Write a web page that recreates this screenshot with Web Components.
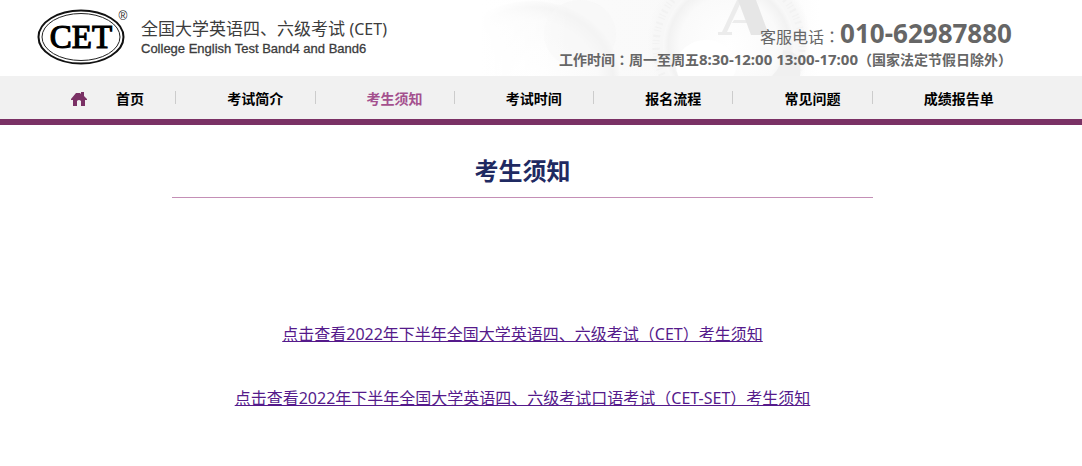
<!DOCTYPE html>
<html lang="zh-CN">
<head>
<meta charset="utf-8">
<meta name="viewport" content="width=device-width, initial-scale=1">
<title>考生须知</title>
<style>
  body {
    margin: 0;
    background: #fff;
    color: #000;
    font-family: "Noto Sans", "Noto Sans CJK SC", sans-serif;
    font-size: 14px;
    --brand: #7a3165;
    --gutter: 0 70px 0 37px;
  }
</style>
</head>
<body>
<site-header>
  <site-logo slot="logo"></site-logo>
  <service-line slot="service"></service-line>
</site-header>
<site-nav>
  <nav-item href="#home" icon>首页</nav-item>
  <nav-item href="#intro">考试简介</nav-item>
  <nav-item href="#notice" current>考生须知</nav-item>
  <nav-item href="#time">考试时间</nav-item>
  <nav-item href="#process">报名流程</nav-item>
  <nav-item href="#faq">常见问题</nav-item>
  <nav-item href="#report">成绩报告单</nav-item>
</site-nav>
<notice-page>
  <span slot="title">考生须知</span>
  <notice-link href="#cet">点击查看2022年下半年全国大学英语四、六级考试（CET）考生须知</notice-link>
  <notice-link href="#cet-set">点击查看2022年下半年全国大学英语四、六级考试口语考试（CET-SET）考生须知</notice-link>
</notice-page>

<script>
const define = (name, html, setup) => customElements.define(name, class extends HTMLElement {
  connectedCallback() {
    if (this.shadowRoot) return;
    this.attachShadow({ mode: 'open' }).innerHTML = html;
    if (setup) setup(this, this.shadowRoot);
  }
});

define('header-art', `
  <style>
    :host { display: block; width: 340px; height: 76px; }
    svg { display: block; }
  </style>
  <svg width="340" height="76" viewBox="0 0 340 76" aria-hidden="true">
    <defs>
      <linearGradient id="haze"><stop offset="0" stop-color="#fff"/><stop offset=".35" stop-color="#fafafa"/><stop offset=".8" stop-color="#f9f9f9"/><stop offset="1" stop-color="#fff"/></linearGradient>
      <radialGradient id="coin"><stop offset="0" stop-color="#fff"/><stop offset=".75" stop-color="#fafafa"/><stop offset=".92" stop-color="#f2f2f2"/><stop offset="1" stop-color="#f9f9f9"/></radialGradient>
      <linearGradient id="fade"><stop offset="0" stop-color="#fff"/><stop offset="1" stop-color="#fff" stop-opacity="0"/></linearGradient>
      <radialGradient id="rim"><stop offset="0" stop-color="#f7f7f7"/><stop offset=".9" stop-color="#f7f7f7"/><stop offset="1" stop-color="#f7f7f7" stop-opacity="0"/></radialGradient>
    </defs>
    <rect width="340" height="76" fill="url(#haze)"/>
    <ellipse cx="52" cy="78" rx="88" ry="77" fill="url(#coin)"/>
    <ellipse cx="100" cy="34" rx="36" ry="34" fill="#f5f5f5" opacity=".5"/>
    <circle cx="249" cy="42" r="82" fill="url(#rim)"/>
    <circle cx="249" cy="46" r="66" fill="url(#coin)"/>
    <ellipse cx="226" cy="66" rx="30" ry="26" fill="#fff"/>
    <circle cx="249" cy="46" r="73" fill="none" stroke="#efefef" stroke-width="7" stroke-dasharray="1 3 2 4 1 2" opacity=".6"/>
    <path d="M262 0L247 32h5v3h-14v-3h4L257 0z" fill="#ececec"/>
    <path d="M254 20h18v3h-20z" fill="#ececec"/>
    <path d="M258 0h18l13 35h-18z" fill="#e6e6e6"/>
    <path d="M303 50q20 0 17 26h-28q10-9 11-26z" fill="#f0f0f0"/>
    <rect width="90" height="76" fill="url(#fade)"/>
  </svg>`);

define('site-header', `
  <style>
    :host { display: block; position: relative; background: #fff; }
    header-art { position: absolute; top: 0; right: 262px; }
    header { position: relative; display: flex; justify-content: space-between; align-items: flex-start; min-height: 76px; padding: var(--gutter); box-sizing: border-box; }
  </style>
  <header-art></header-art>
  <header><slot name="logo"></slot><slot name="service"></slot></header>`);

define('site-logo', `
  <style>
    :host { display: flex; gap: 12px; padding-top: 8px; color: #3c3c3c; }
    svg { display: block; }
    .name { display: grid; align-content: start; padding-top: 10px; white-space: nowrap; }
    .zh { font-size: 17px; line-height: 22px; }
    small { font-size: 16px; }
    .en { font: 13px/18px "Liberation Sans", Arial, sans-serif; -webkit-text-stroke: 0.3px; }
  </style>
  <svg width="92" height="60" viewBox="0 0 92 60" role="img" aria-label="CET">
    <ellipse cx="44" cy="29" rx="42.5" ry="26.5" fill="#fff" stroke="#111" stroke-width="2"/>
    <ellipse cx="44" cy="29" rx="39" ry="23.5" fill="none" stroke="#222" stroke-width="1"/>
    <text x="44" y="40" text-anchor="middle" font-family="Liberation Serif, serif" font-size="33" fill="#000" stroke="#000" stroke-width="1.2">CET</text>
    <text x="86" y="12" text-anchor="middle" font-family="Liberation Sans, sans-serif" font-size="12" fill="#222">®</text>
  </svg>
  <div class="name">
    <span class="zh">全国大学英语四、六级考试 <small>(CET)</small></span>
    <span class="en">College English Test Band4 and Band6</span>
  </div>`);

define('service-line', `
  <style>
    :host { display: grid; justify-items: end; padding-top: 18px; color: #666; white-space: nowrap; }
    .phone { height: 30px; line-height: 30px; font-size: 16px; }
    strong { font-size: 26px; }
    .hours { font-size: 14px; line-height: 22px; font-weight: bold; }
    .hours span { font-size: 15px; }
    i { font-style: normal; font-family: "Noto Sans CJK TC", sans-serif; }
  </style>
  <div class="phone">客服电话<i lang="zh-TW">：</i><strong>010-62987880</strong></div>
  <div class="hours">工作时间<i lang="zh-TW">：</i>周一至周五<span>8:30-12:00 13:00-17:00</span>（国家法定节假日除外）</div>`);

define('site-nav', `
  <style>
    :host { display: block; background: #f1f1f1; border-bottom: 6px solid var(--brand); }
    nav { display: grid; grid-template-columns: repeat(7, 1fr); padding: var(--gutter); }
  </style>
  <nav><slot></slot></nav>`);

define('nav-item', `
  <style>
    :host { display: flex; align-items: center; height: 43px; padding-left: 51px; }
    :host([icon]) { padding-left: 34px; }
    :host(:not(:last-child))::after { content: ""; width: 1px; height: 13px; margin-left: auto; background: #ccc; }
    a { display: flex; align-items: center; gap: 29px; color: #000; font-weight: bold; text-decoration: none; white-space: nowrap; line-height: 20px; padding-top: 3px; }
    :host([current]) a { color: #a4508e; }
    svg { display: none; fill: var(--brand); }
    :host([icon]) svg { display: block; }
  </style>
  <a><svg width="16" height="14" viewBox="0 0 16 14" aria-hidden="true"><path d="M5 1h4l1 1V0h3v4l3 3v1h-2v6h-4V9q-2-2-4 0v5H2V8H0V7z"/></svg><slot></slot></a>`,
  (host, root) => {
    const a = root.querySelector('a');
    a.href = host.getAttribute('href');
    if (host.hasAttribute('current')) a.setAttribute('aria-current', 'page');
  });

define('notice-page', `
  <style>
    :host { display: block; padding: 26px 37px 48px 0; }
    h1 { box-sizing: border-box; max-width: 701px; margin: 0 auto 120px; padding-bottom: 6px; border-bottom: 1px solid #c48fb6; color: #1f2a62; font-size: 24px; line-height: 40px; text-align: center; }
    .links { display: grid; gap: 32px; justify-items: center; }
  </style>
  <main><h1><slot name="title"></slot></h1><div class="links"><slot></slot></div></main>`);

define('notice-link', `
  <style>
    :host { display: block; font-size: 16px; line-height: 32px; }
    a { color: #551a8b; text-decoration: underline; }
  </style>
  <a><slot></slot></a>`,
  (host, root) => { root.querySelector('a').href = host.getAttribute('href'); });
</script>
</body>
</html>
